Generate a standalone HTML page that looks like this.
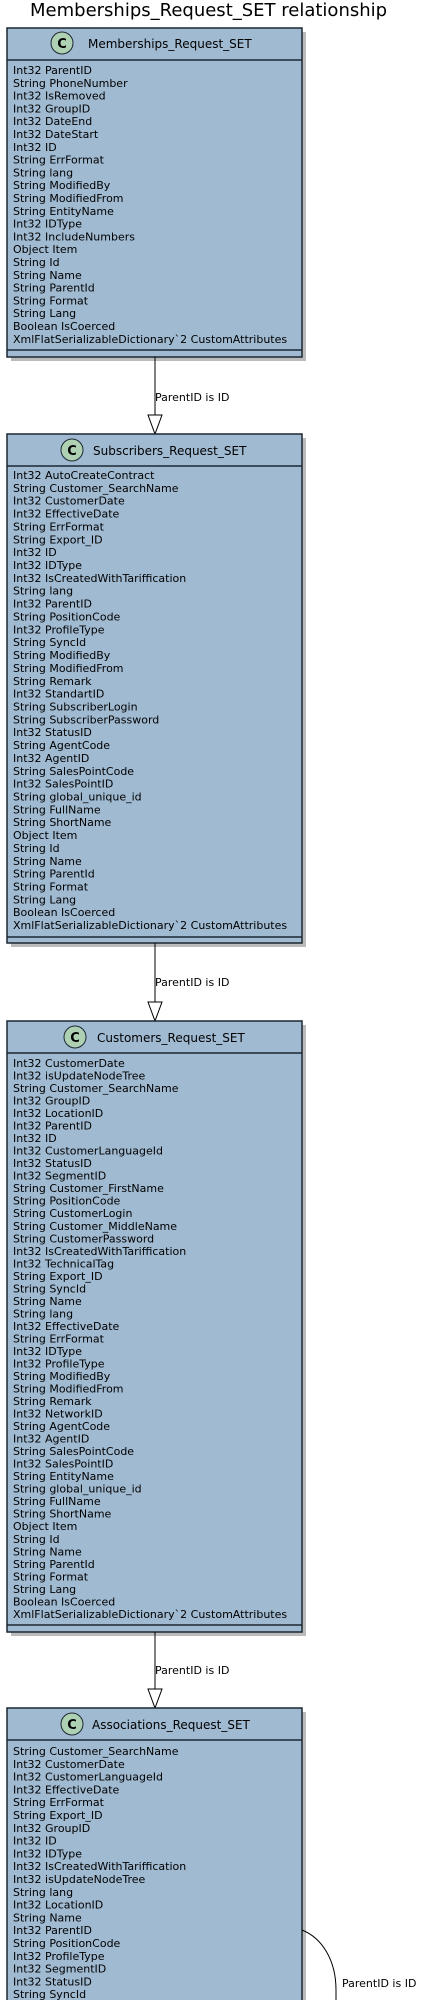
<!DOCTYPE html>
<html><head><meta charset="utf-8"><style>
html,body{margin:0;padding:0;background:#fff;width:440px;height:2000px;overflow:hidden}
svg{display:block}
text{font-family:"DejaVu Sans","Liberation Sans",sans-serif;fill:#000}
.a{font-size:11px}
.h{font-size:12px}
.box{fill:#A0BAD1;stroke:#1c2733;stroke-width:1.5}
.sh{fill:#8e8e8e;opacity:.6}
.ln{stroke:#1c2733;stroke-width:1.5}
.c{fill:#ADD1B2;stroke:#1c2733;stroke-width:1}
</style></head><body>
<svg width="440" height="2000" viewBox="0 0 440 2000" xmlns="http://www.w3.org/2000/svg">
<text x="30" y="16" style="font-size:18px">Memberships_Request_SET relationship</text>

<rect class="sh" x="11" y="32" width="295" height="329"/>
<rect class="box" x="7" y="28" width="295" height="329"/>
<line class="ln" x1="7" y1="60" x2="302" y2="60"/>
<line class="ln" x1="7" y1="350" x2="302" y2="350"/>
<circle class="c" cx="62" cy="43" r="11"/>
<text x="62" y="48" text-anchor="middle" style="font-size:13px;font-weight:bold">C</text>
<text class="h" x="88" y="48">Memberships_Request_SET</text>
<text class="a" x="13" y="74">
<tspan x="13" dy="0">Int32 ParentID</tspan>
<tspan x="13" dy="12.8">String PhoneNumber</tspan>
<tspan x="13" dy="12.8">Int32 IsRemoved</tspan>
<tspan x="13" dy="12.8">Int32 GroupID</tspan>
<tspan x="13" dy="12.8">Int32 DateEnd</tspan>
<tspan x="13" dy="12.8">Int32 DateStart</tspan>
<tspan x="13" dy="12.8">Int32 ID</tspan>
<tspan x="13" dy="12.8">String ErrFormat</tspan>
<tspan x="13" dy="12.8">String lang</tspan>
<tspan x="13" dy="12.8">String ModifiedBy</tspan>
<tspan x="13" dy="12.8">String ModifiedFrom</tspan>
<tspan x="13" dy="12.8">String EntityName</tspan>
<tspan x="13" dy="12.8">Int32 IDType</tspan>
<tspan x="13" dy="12.8">Int32 IncludeNumbers</tspan>
<tspan x="13" dy="12.8">Object Item</tspan>
<tspan x="13" dy="12.8">String Id</tspan>
<tspan x="13" dy="12.8">String Name</tspan>
<tspan x="13" dy="12.8">String ParentId</tspan>
<tspan x="13" dy="12.8">String Format</tspan>
<tspan x="13" dy="12.8">String Lang</tspan>
<tspan x="13" dy="12.8">Boolean IsCoerced</tspan>
<tspan x="13" dy="12.8">XmlFlatSerializableDictionary`2 CustomAttributes</tspan>
</text>

<line x1="155" y1="357" x2="155" y2="415" stroke="#000" stroke-width="1"/>
<polygon points="148,415 162,415 155,434" fill="#fff" stroke="#000" stroke-width="1"/>
<text class="a" x="155" y="401">ParentID is ID</text>

<rect class="sh" x="11" y="438" width="295" height="509"/>
<rect class="box" x="7" y="434" width="295" height="509"/>
<line class="ln" x1="7" y1="466" x2="302" y2="466"/>
<line class="ln" x1="7" y1="937" x2="302" y2="937"/>
<circle class="c" cx="72" cy="450" r="11"/>
<text x="72" y="455" text-anchor="middle" style="font-size:13px;font-weight:bold">C</text>
<text class="h" x="93" y="455">Subscribers_Request_SET</text>
<text class="a" x="13" y="479">
<tspan x="13" dy="0">Int32 AutoCreateContract</tspan>
<tspan x="13" dy="12.86">String Customer_SearchName</tspan>
<tspan x="13" dy="12.86">Int32 CustomerDate</tspan>
<tspan x="13" dy="12.86">Int32 EffectiveDate</tspan>
<tspan x="13" dy="12.86">String ErrFormat</tspan>
<tspan x="13" dy="12.86">String Export_ID</tspan>
<tspan x="13" dy="12.86">Int32 ID</tspan>
<tspan x="13" dy="12.86">Int32 IDType</tspan>
<tspan x="13" dy="12.86">Int32 IsCreatedWithTariffication</tspan>
<tspan x="13" dy="12.86">String lang</tspan>
<tspan x="13" dy="12.86">Int32 ParentID</tspan>
<tspan x="13" dy="12.86">String PositionCode</tspan>
<tspan x="13" dy="12.86">Int32 ProfileType</tspan>
<tspan x="13" dy="12.86">String SyncId</tspan>
<tspan x="13" dy="12.86">String ModifiedBy</tspan>
<tspan x="13" dy="12.86">String ModifiedFrom</tspan>
<tspan x="13" dy="12.86">String Remark</tspan>
<tspan x="13" dy="12.86">Int32 StandartID</tspan>
<tspan x="13" dy="12.86">String SubscriberLogin</tspan>
<tspan x="13" dy="12.86">String SubscriberPassword</tspan>
<tspan x="13" dy="12.86">Int32 StatusID</tspan>
<tspan x="13" dy="12.86">String AgentCode</tspan>
<tspan x="13" dy="12.86">Int32 AgentID</tspan>
<tspan x="13" dy="12.86">String SalesPointCode</tspan>
<tspan x="13" dy="12.86">Int32 SalesPointID</tspan>
<tspan x="13" dy="12.86">String global_unique_id</tspan>
<tspan x="13" dy="12.86">String FullName</tspan>
<tspan x="13" dy="12.86">String ShortName</tspan>
<tspan x="13" dy="12.86">Object Item</tspan>
<tspan x="13" dy="12.86">String Id</tspan>
<tspan x="13" dy="12.86">String Name</tspan>
<tspan x="13" dy="12.86">String ParentId</tspan>
<tspan x="13" dy="12.86">String Format</tspan>
<tspan x="13" dy="12.86">String Lang</tspan>
<tspan x="13" dy="12.86">Boolean IsCoerced</tspan>
<tspan x="13" dy="12.86">XmlFlatSerializableDictionary`2 CustomAttributes</tspan>
</text>

<line x1="155" y1="943" x2="155" y2="1002" stroke="#000" stroke-width="1"/>
<polygon points="148,1002 162,1002 155,1021" fill="#fff" stroke="#000" stroke-width="1"/>
<text class="a" x="155" y="986">ParentID is ID</text>

<rect class="sh" x="11" y="1025" width="295" height="611"/>
<rect class="box" x="7" y="1021" width="295" height="611"/>
<line class="ln" x1="7" y1="1053" x2="302" y2="1053"/>
<line class="ln" x1="7" y1="1625" x2="302" y2="1625"/>
<circle class="c" cx="75" cy="1037" r="11"/>
<text x="75" y="1042" text-anchor="middle" style="font-size:13px;font-weight:bold">C</text>
<text class="h" x="97" y="1042">Customers_Request_SET</text>
<text class="a" x="13" y="1067">
<tspan x="13" dy="0">Int32 CustomerDate</tspan>
<tspan x="13" dy="12.52">Int32 isUpdateNodeTree</tspan>
<tspan x="13" dy="12.52">String Customer_SearchName</tspan>
<tspan x="13" dy="12.52">Int32 GroupID</tspan>
<tspan x="13" dy="12.52">Int32 LocationID</tspan>
<tspan x="13" dy="12.52">Int32 ParentID</tspan>
<tspan x="13" dy="12.52">Int32 ID</tspan>
<tspan x="13" dy="12.52">Int32 CustomerLanguageId</tspan>
<tspan x="13" dy="12.52">Int32 StatusID</tspan>
<tspan x="13" dy="12.52">Int32 SegmentID</tspan>
<tspan x="13" dy="12.52">String Customer_FirstName</tspan>
<tspan x="13" dy="12.52">String PositionCode</tspan>
<tspan x="13" dy="12.52">String CustomerLogin</tspan>
<tspan x="13" dy="12.52">String Customer_MiddleName</tspan>
<tspan x="13" dy="12.52">String CustomerPassword</tspan>
<tspan x="13" dy="12.52">Int32 IsCreatedWithTariffication</tspan>
<tspan x="13" dy="12.52">Int32 TechnicalTag</tspan>
<tspan x="13" dy="12.52">String Export_ID</tspan>
<tspan x="13" dy="12.52">String SyncId</tspan>
<tspan x="13" dy="12.52">String Name</tspan>
<tspan x="13" dy="12.52">String lang</tspan>
<tspan x="13" dy="12.52">Int32 EffectiveDate</tspan>
<tspan x="13" dy="12.52">String ErrFormat</tspan>
<tspan x="13" dy="12.52">Int32 IDType</tspan>
<tspan x="13" dy="12.52">Int32 ProfileType</tspan>
<tspan x="13" dy="12.52">String ModifiedBy</tspan>
<tspan x="13" dy="12.52">String ModifiedFrom</tspan>
<tspan x="13" dy="12.52">String Remark</tspan>
<tspan x="13" dy="12.52">Int32 NetworkID</tspan>
<tspan x="13" dy="12.52">String AgentCode</tspan>
<tspan x="13" dy="12.52">Int32 AgentID</tspan>
<tspan x="13" dy="12.52">String SalesPointCode</tspan>
<tspan x="13" dy="12.52">Int32 SalesPointID</tspan>
<tspan x="13" dy="12.52">String EntityName</tspan>
<tspan x="13" dy="12.52">String global_unique_id</tspan>
<tspan x="13" dy="12.52">String FullName</tspan>
<tspan x="13" dy="12.52">String ShortName</tspan>
<tspan x="13" dy="12.52">Object Item</tspan>
<tspan x="13" dy="12.52">String Id</tspan>
<tspan x="13" dy="12.52">String Name</tspan>
<tspan x="13" dy="12.52">String ParentId</tspan>
<tspan x="13" dy="12.52">String Format</tspan>
<tspan x="13" dy="12.52">String Lang</tspan>
<tspan x="13" dy="12.52">Boolean IsCoerced</tspan>
<tspan x="13" dy="12.52">XmlFlatSerializableDictionary`2 CustomAttributes</tspan>
</text>

<line x1="155" y1="1632" x2="155" y2="1689" stroke="#000" stroke-width="1"/>
<polygon points="148,1689 162,1689 155,1708" fill="#fff" stroke="#000" stroke-width="1"/>
<text class="a" x="155" y="1674">ParentID is ID</text>

<rect class="sh" x="11" y="1712" width="295" height="290"/>
<rect class="box" x="7" y="1708" width="295" height="296"/>
<line class="ln" x1="7" y1="1740" x2="302" y2="1740"/>
<circle class="c" cx="72" cy="1724" r="11"/>
<text x="72" y="1729" text-anchor="middle" style="font-size:13px;font-weight:bold">C</text>
<text class="h" x="92" y="1729">Associations_Request_SET</text>
<text class="a" x="13" y="1755">
<tspan x="13" dy="0">String Customer_SearchName</tspan>
<tspan x="13" dy="12.8">Int32 CustomerDate</tspan>
<tspan x="13" dy="12.8">Int32 CustomerLanguageId</tspan>
<tspan x="13" dy="12.8">Int32 EffectiveDate</tspan>
<tspan x="13" dy="12.8">String ErrFormat</tspan>
<tspan x="13" dy="12.8">String Export_ID</tspan>
<tspan x="13" dy="12.8">Int32 GroupID</tspan>
<tspan x="13" dy="12.8">Int32 ID</tspan>
<tspan x="13" dy="12.8">Int32 IDType</tspan>
<tspan x="13" dy="12.8">Int32 IsCreatedWithTariffication</tspan>
<tspan x="13" dy="12.8">Int32 isUpdateNodeTree</tspan>
<tspan x="13" dy="12.8">String lang</tspan>
<tspan x="13" dy="12.8">Int32 LocationID</tspan>
<tspan x="13" dy="12.8">String Name</tspan>
<tspan x="13" dy="12.8">Int32 ParentID</tspan>
<tspan x="13" dy="12.8">String PositionCode</tspan>
<tspan x="13" dy="12.8">Int32 ProfileType</tspan>
<tspan x="13" dy="12.8">Int32 SegmentID</tspan>
<tspan x="13" dy="12.8">Int32 StatusID</tspan>
<tspan x="13" dy="12.8">String SyncId</tspan>
</text>

<path d="M302,1930 C322,1938 336,1960 336,1990 L336,2002" fill="none" stroke="#000" stroke-width="1"/>
<text class="a" x="342" y="1987">ParentID is ID</text>
</svg>
</body></html>
